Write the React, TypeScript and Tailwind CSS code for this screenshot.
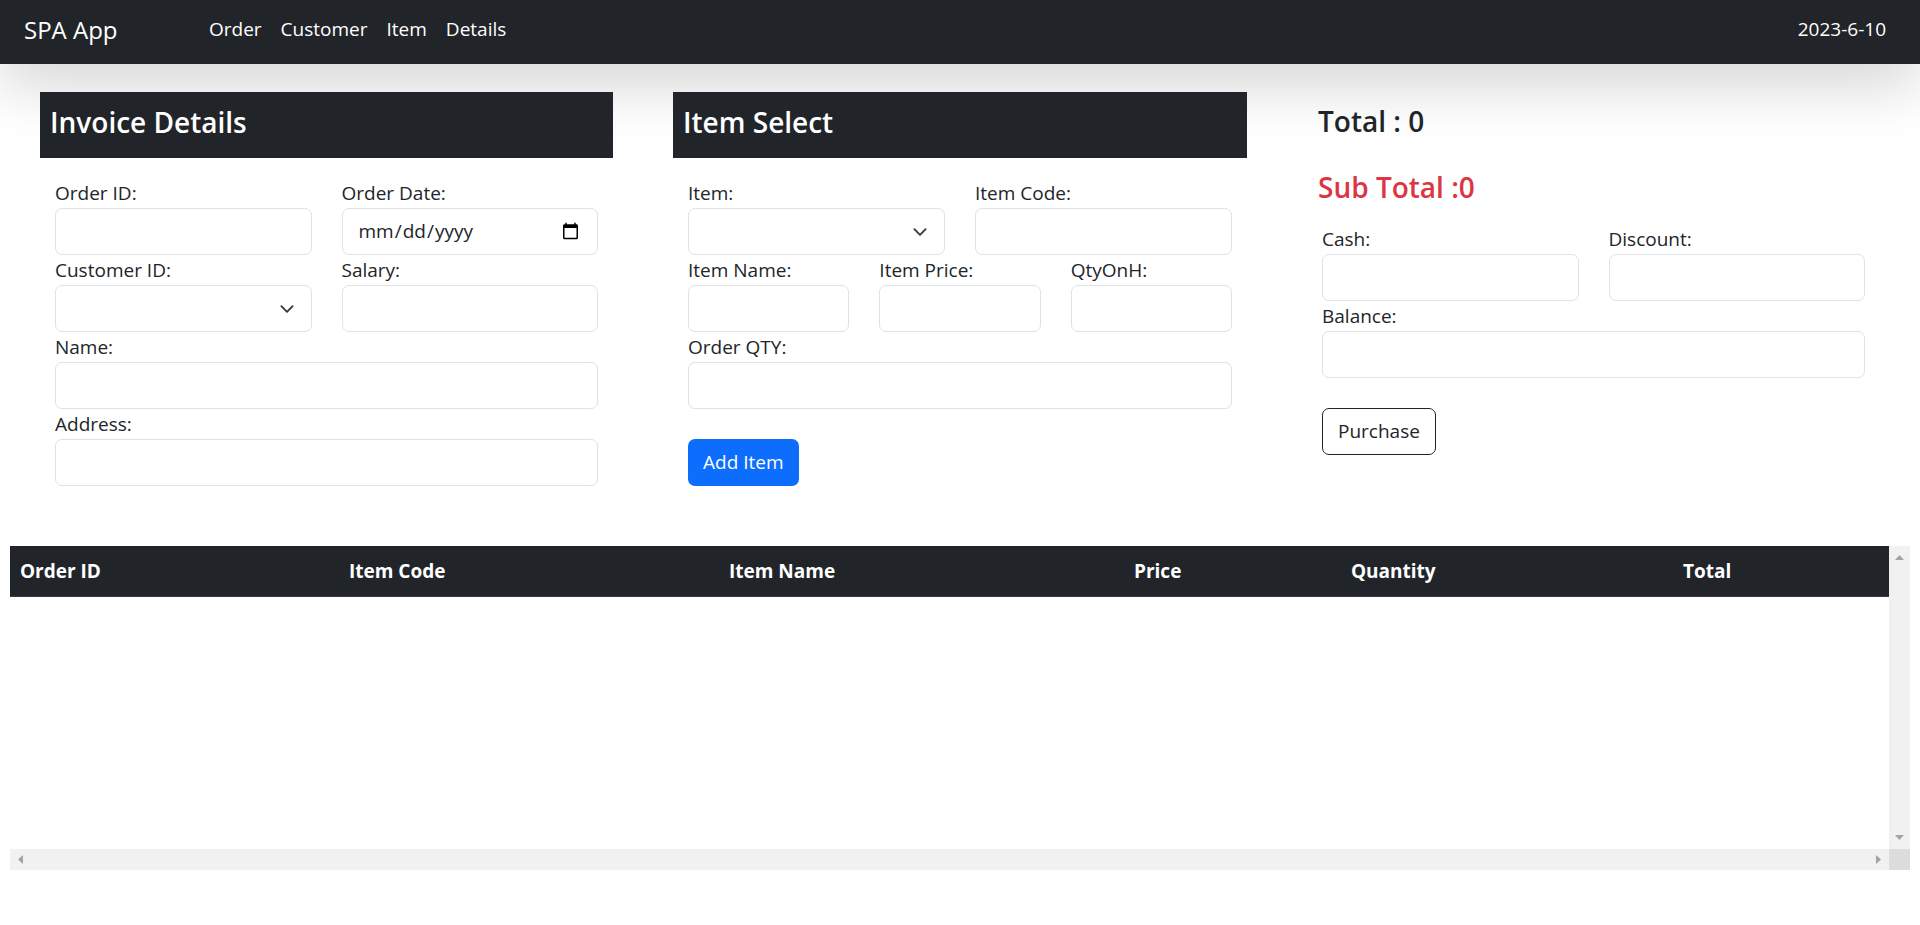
import React from 'react';

const labelCls = 'block text-[19px] leading-[30px] text-[#212529]';
const inputCls =
  'block w-full h-[47px] rounded-[7px] border border-[#dee2e6] bg-white px-[15px] text-[19px] text-[#212529] outline-none';

function Field({ label, type = 'text', span = '' }: { label: string; type?: string; span?: string }) {
  return (
    <div className={span}>
      <label className={labelCls}>{label}</label>
      <input type={type} className={inputCls} />
    </div>
  );
}

function SelectField({ label }: { label: string }) {
  return (
    <div>
      <label className={labelCls}>{label}</label>
      <div className="relative">
        <select className={`${inputCls} appearance-none`}>
          <option></option>
        </select>
        {/* chevron like bootstrap form-select */}
        <svg
          className="pointer-events-none absolute right-[15px] top-1/2 -translate-y-1/2"
          width="20"
          height="15"
          viewBox="0 0 16 16"
        >
          <path d="M2 5l6 6 6-6" fill="none" stroke="#343a40" strokeWidth="2" strokeLinecap="round" strokeLinejoin="round" />
        </svg>
      </div>
    </div>
  );
}

function Arrow({ dir }: { dir: 'up' | 'down' | 'left' | 'right' }) {
  const vert = dir === 'up' || dir === 'down';
  const pts = {
    up: '0,5 4.5,0 9,5',
    down: '0,0 9,0 4.5,5',
    left: '5,0 5,9 0,4.5',
    right: '0,0 5,4.5 0,9',
  }[dir];
  return (
    <svg width={vert ? 9 : 5} height={vert ? 5 : 9} viewBox={vert ? '0 0 9 5' : '0 0 5 9'}>
      <polygon points={pts} fill="#a3a3a3" />
    </svg>
  );
}

function PanelHeader({ title }: { title: string }) {
  return (
    <div className="flex h-[66px] items-center bg-[#212529] px-[10px] pb-[7px]">
      <h4 className="text-[28px] font-semibold leading-[36px] text-white">{title}</h4>
    </div>
  );
}

export default function App() {
  const columns = [
    { name: 'Order ID', w: 'w-[329px]' },
    { name: 'Item Code', w: 'w-[380px]' },
    { name: 'Item Name', w: 'w-[405px]' },
    { name: 'Price', w: 'w-[217px]' },
    { name: 'Quantity', w: 'w-[332px]' },
    { name: 'Total', w: '' },
  ];

  return (
    <div className="min-h-[925px] bg-white font-['Open_Sans',sans-serif] text-[#212529]">
      {/* Navbar */}
      <nav className="flex h-[64px] items-center bg-[#212529] pb-[5px] pl-[24px] pr-[34px] shadow-[0_20px_60px_rgba(0,0,0,0.175)]">
        <span className="inline-block w-[185px] text-[24px] leading-[30px] text-white">SPA App</span>
        <ul className="flex gap-[19px] text-[19px] text-white">
          <li>Order</li>
          <li>Customer</li>
          <li>Item</li>
          <li>Details</li>
        </ul>
        <span className="ml-auto text-[19px] text-white">2023-6-10</span>
      </nav>

      <main className="mt-[28px] flex items-start gap-[60px] pl-[40px]">
        {/* Invoice Details */}
        <section className="w-[573px]">
          <PanelHeader title="Invoice Details" />
          <div className="mt-[20px] grid grid-cols-2 gap-x-[30px] px-[15px]">
            <Field label="Order ID:" />
            <Field label="Order Date:" type="date" />
            <SelectField label="Customer ID:" />
            <Field label="Salary:" />
            <Field label="Name:" span="col-span-2" />
            <Field label="Address:" span="col-span-2" />
          </div>
        </section>

        {/* Item Select */}
        <section className="w-[574px]">
          <PanelHeader title="Item Select" />
          <div className="mt-[20px] px-[15px]">
            <div className="grid grid-cols-2 gap-x-[30px]">
              <SelectField label="Item:" />
              <Field label="Item Code:" />
            </div>
            <div className="grid grid-cols-3 gap-x-[30px]">
              <Field label="Item Name:" />
              <Field label="Item Price:" />
              <Field label="QtyOnH:" />
            </div>
            <Field label="Order QTY:" />
            <button className="mt-[30px] h-[47px] rounded-[7px] bg-[#0d6efd] px-[15px] text-[19px] text-white">
              Add Item
            </button>
          </div>
        </section>

        {/* Totals */}
        <section className="w-[573px] pt-[11px]">
          <h4 className="pl-[11px] text-[28px] font-semibold leading-[36px] text-[#212529]">Total : 0</h4>
          <h4 className="mt-[30px] pl-[11px] text-[28px] font-semibold leading-[36px] text-[#dc3545]">Sub Total :0</h4>
          <div className="mt-[19px] grid grid-cols-2 gap-x-[30px] px-[15px]">
            <Field label="Cash:" />
            <Field label="Discount:" />
            <Field label="Balance:" span="col-span-2" />
          </div>
          <div className="px-[15px]">
            <button className="mt-[30px] h-[47px] rounded-[7px] border border-[#212529] bg-white px-[15px] text-[19px] text-[#212529]">
              Purchase
            </button>
          </div>
        </section>
      </main>

      {/* Order table with scroll tracks */}
      <div className="mx-[10px] mt-[60px] flex flex-col">
        <div className="flex h-[303px]">
          <div className="flex-1 bg-white">
            <table className="w-full table-fixed border-collapse">
              <thead>
                <tr className="border-b border-[#373b3e] bg-[#212529]">
                  {columns.map((c) => (
                    <th key={c.name} className={`${c.w} px-[10px] py-[10px] text-left text-[19px] font-bold leading-[30px] text-white`}>
                      {c.name}
                    </th>
                  ))}
                </tr>
              </thead>
              <tbody></tbody>
            </table>
          </div>
          <div className="flex w-[21px] flex-col items-center justify-between bg-[#f1f1f1] py-[9px]">
            <Arrow dir="up" />
            <Arrow dir="down" />
          </div>
        </div>
        <div className="flex h-[21px]">
          <div className="flex flex-1 items-center justify-between bg-[#f1f1f1] px-[8px]">
            <Arrow dir="left" />
            <Arrow dir="right" />
          </div>
          <div className="w-[21px] bg-[#dcdcdc]" />
        </div>
      </div>
    </div>
  );
}
